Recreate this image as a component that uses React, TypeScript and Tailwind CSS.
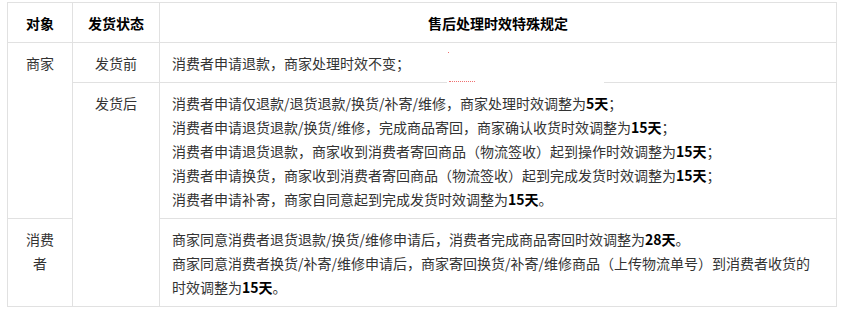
const rows = {
  before: "消费者申请退款，商家处理时效不变；",
};

function B({ children }: { children: React.ReactNode }) {
  return <b className="font-bold text-black">{children}</b>;
}

function Line({ children }: { children: React.ReactNode }) {
  return <div className="h-6 overflow-hidden whitespace-nowrap">{children}</div>;
}

const cell = "border border-[#e1e1e1] pt-2 pb-[7px] align-top";

export default function App() {
  return (
    <div
      className="relative h-[311px] w-[841px] bg-white pl-[7px] pt-[2px] text-[14px] leading-[24px] text-[#333]"
      style={{ fontFamily: '"Noto Sans CJK SC", "Microsoft YaHei", sans-serif' }}
    >
      <table className="w-[830px] table-fixed border-collapse">
        <colgroup>
          <col className="w-[65px]" />
          <col className="w-[87px]" />
          <col />
        </colgroup>
        <thead>
          <tr>
            <th className={`${cell} px-2 text-center font-bold text-black`}>
              <Line>对象</Line>
            </th>
            <th className={`${cell} px-2 text-center font-bold text-black`}>
              <Line>发货状态</Line>
            </th>
            <th className={`${cell} px-3 text-center font-bold text-black`}>
              <Line>售后处理时效特殊规定</Line>
            </th>
          </tr>
        </thead>
        <tbody>
          <tr>
            <td rowSpan={2} className={`${cell} px-2 text-center`}>
              <Line>商家</Line>
            </td>
            <td className={`${cell} px-2 text-center`}>
              <Line>发货前</Line>
            </td>
            <td className={`${cell} px-3`}>
              <Line>{rows.before}</Line>
            </td>
          </tr>
          <tr>
            <td rowSpan={2} className={`${cell} px-2 text-center`}>
              <Line>发货后</Line>
            </td>
            <td className={`${cell} px-3`}>
              <Line>消费者申请仅退款/退货退款/换货/补寄/维修，商家处理时效调整为<B>5天</B>；</Line>
              <Line>消费者申请退货退款/换货/维修，完成商品寄回，商家确认收货时效调整为<B>15天</B>；</Line>
              <Line>消费者申请退货退款，商家收到消费者寄回商品（物流签收）起到操作时效调整为<B>15天</B>；</Line>
              <Line>消费者申请换货，商家收到消费者寄回商品（物流签收）起到完成发货时效调整为<B>15天</B>；</Line>
              <Line>消费者申请补寄，商家自同意起到完成发货时效调整为<B>15天</B>。</Line>
            </td>
          </tr>
          <tr>
            <td className={`${cell} px-2 text-center`}>
              <Line>消费</Line>
              <Line>者</Line>
            </td>
            <td className={`${cell} px-3`}>
              <Line>商家同意消费者退货退款/换货/维修申请后，消费者完成商品寄回时效调整为<B>28天</B>。</Line>
              <Line>商家同意消费者换货/补寄/维修申请后，商家寄回换货/补寄/维修商品（上传物流单号）到消费者收货的</Line>
              <Line>时效调整为<B>15天</B>。</Line>
            </td>
          </tr>
        </tbody>
      </table>
      <div className="absolute left-[447px] top-[81px] h-[3px] w-[157px] bg-white" />
      <div className="absolute left-[449px] top-[81px] h-px w-[26px] border-t border-dotted border-[#f07070]" />
      <div className="absolute left-[448px] top-[52px] h-px w-px bg-[#f07070]" />
    </div>
  );
}
